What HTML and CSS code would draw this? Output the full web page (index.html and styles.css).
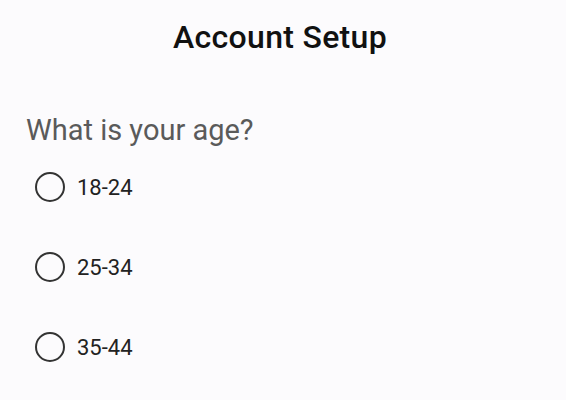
FILE: index.html
```html
<!DOCTYPE html>
<html>
<head>
    <title>Account Setup</title>
    <link rel="stylesheet" href="styles.css">
</head>
<body>
    <div class="screen">
        <div class="title">Account Setup</div>
        <div class="question">What is your age?</div>
        <div class="options">
            <label class="option"><span class="radio"></span><span class="label">18-24</span></label>
            <label class="option"><span class="radio"></span><span class="label">25-34</span></label>
            <label class="option"><span class="radio"></span><span class="label">35-44</span></label>
        </div>
    </div>
</body>
</html>
```

FILE: styles.css
```css
body {
    margin: 0;
    background-color: #fcfbfd;
    font-family: Roboto, "Liberation Sans", sans-serif;
}
.screen {
    height: 400px;
    overflow: hidden;
}
.title {
    text-align: center;
    font-size: 32px;
    font-weight: 500;
    color: #111;
    padding: 17px 6px 0 0;
    line-height: 40px;
    letter-spacing: 0.3px;
}
.question {
    margin: 55px 0 0 26px;
    font-size: 29px;
    color: #5a5a5a;
    line-height: 36px;
}
.options {
    display: flex;
    flex-direction: column;
    margin-top: -1px;
}
.option {
    display: flex;
    align-items: center;
    height: 80px;
    padding-left: 35px;
}
.radio {
    width: 26px;
    height: 26px;
    border: 2.6px solid #333;
    border-radius: 50%;
    margin-right: 12px;
}
.label {
    font-size: 22px;
    color: #222;
}
```
